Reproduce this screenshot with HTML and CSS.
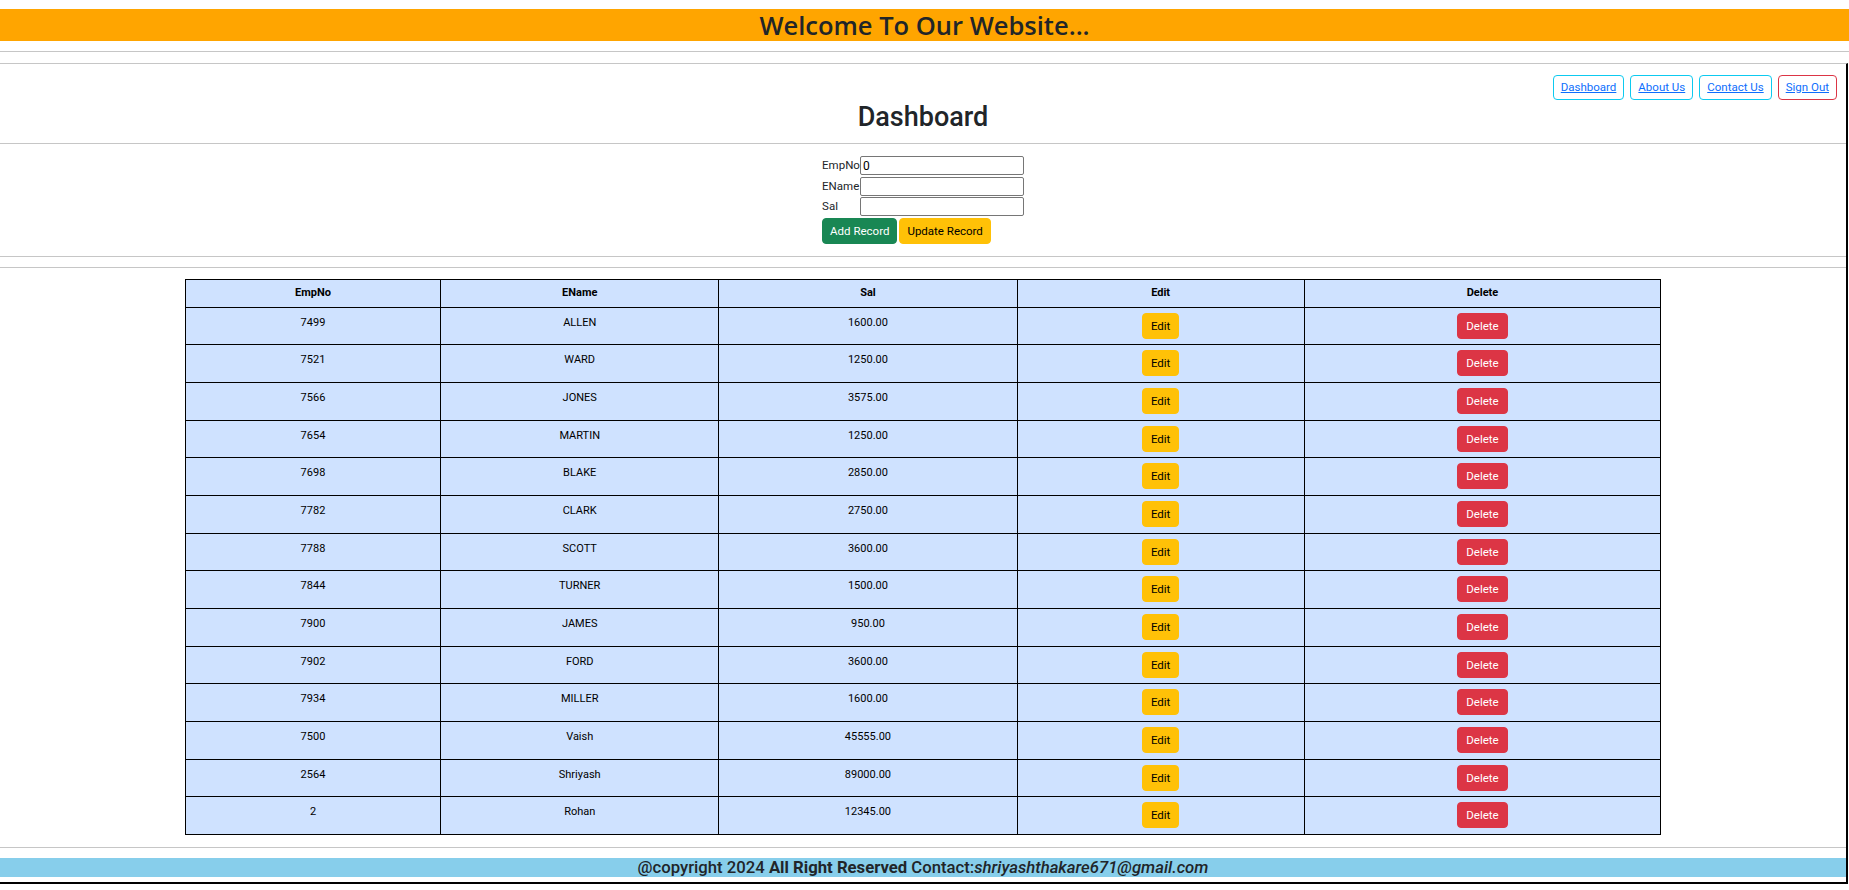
FILE: index.html
```html
<!DOCTYPE html>
<html lang="en">
<head>
<meta charset="utf-8">
<title>Dashboard</title>
<link rel="stylesheet" href="styles.css">
</head>
<body>
<header class="top-bar"><h4 class="top-title">Welcome To Our Website...</h4></header>
<hr class="rule rule-first">
<div class="page">
  <nav class="nav">
    <a class="nav-btn nav-info" href="#">Dashboard</a>
    <a class="nav-btn nav-info" href="#">About Us</a>
    <a class="nav-btn nav-info" href="#">Contact Us</a>
    <a class="nav-btn nav-danger" href="#">Sign Out</a>
  </nav>
  <h3 class="title">Dashboard</h3>
  <hr class="rule rule-title">
  <form class="emp-form">
    <table class="form-table">
      <tr><td class="lbl">EmpNo</td><td class="fld"><input class="inp" type="text" value="0"></td></tr>
      <tr><td class="lbl">EName</td><td class="fld"><input class="inp" type="text" value=""></td></tr>
      <tr><td class="lbl">Sal</td><td class="fld"><input class="inp" type="text" value=""></td></tr>
    </table>
    <div class="form-actions">
      <button type="button" class="btn btn-success">Add Record</button>
      <button type="button" class="btn btn-warning">Update Record</button>
    </div>
  </form>
  <hr class="rule rule-form">
  <hr class="rule rule-form2">
  <table class="data">
    <colgroup>
      <col class="c1"><col class="c2"><col class="c3"><col class="c4"><col class="c5">
    </colgroup>
    <thead>
      <tr><th>EmpNo</th><th>EName</th><th>Sal</th><th>Edit</th><th>Delete</th></tr>
    </thead>
    <tbody>
      <tr><td>7499</td><td>ALLEN</td><td>1600.00</td><td><button type="button" class="btn btn-warning">Edit</button></td><td><button type="button" class="btn btn-danger">Delete</button></td></tr>
      <tr><td>7521</td><td>WARD</td><td>1250.00</td><td><button type="button" class="btn btn-warning">Edit</button></td><td><button type="button" class="btn btn-danger">Delete</button></td></tr>
      <tr><td>7566</td><td>JONES</td><td>3575.00</td><td><button type="button" class="btn btn-warning">Edit</button></td><td><button type="button" class="btn btn-danger">Delete</button></td></tr>
      <tr><td>7654</td><td>MARTIN</td><td>1250.00</td><td><button type="button" class="btn btn-warning">Edit</button></td><td><button type="button" class="btn btn-danger">Delete</button></td></tr>
      <tr><td>7698</td><td>BLAKE</td><td>2850.00</td><td><button type="button" class="btn btn-warning">Edit</button></td><td><button type="button" class="btn btn-danger">Delete</button></td></tr>
      <tr><td>7782</td><td>CLARK</td><td>2750.00</td><td><button type="button" class="btn btn-warning">Edit</button></td><td><button type="button" class="btn btn-danger">Delete</button></td></tr>
      <tr><td>7788</td><td>SCOTT</td><td>3600.00</td><td><button type="button" class="btn btn-warning">Edit</button></td><td><button type="button" class="btn btn-danger">Delete</button></td></tr>
      <tr><td>7844</td><td>TURNER</td><td>1500.00</td><td><button type="button" class="btn btn-warning">Edit</button></td><td><button type="button" class="btn btn-danger">Delete</button></td></tr>
      <tr><td>7900</td><td>JAMES</td><td>950.00</td><td><button type="button" class="btn btn-warning">Edit</button></td><td><button type="button" class="btn btn-danger">Delete</button></td></tr>
      <tr><td>7902</td><td>FORD</td><td>3600.00</td><td><button type="button" class="btn btn-warning">Edit</button></td><td><button type="button" class="btn btn-danger">Delete</button></td></tr>
      <tr><td>7934</td><td>MILLER</td><td>1600.00</td><td><button type="button" class="btn btn-warning">Edit</button></td><td><button type="button" class="btn btn-danger">Delete</button></td></tr>
      <tr><td>7500</td><td>Vaish</td><td>45555.00</td><td><button type="button" class="btn btn-warning">Edit</button></td><td><button type="button" class="btn btn-danger">Delete</button></td></tr>
      <tr><td>2564</td><td>Shriyash</td><td>89000.00</td><td><button type="button" class="btn btn-warning">Edit</button></td><td><button type="button" class="btn btn-danger">Delete</button></td></tr>
      <tr><td>2</td><td>Rohan</td><td>12345.00</td><td><button type="button" class="btn btn-warning">Edit</button></td><td><button type="button" class="btn btn-danger">Delete</button></td></tr>
    </tbody>
  </table>
  <hr class="rule rule-table">
  <footer class="footer">
    <h6 class="footer-text">@copyright 2024 <b>All Right Reserved</b> Contact:<i>shriyashthakare671@gmail.com</i></h6>
  </footer>
</div>
</body>
</html>
```

FILE: styles.css
```css
* { box-sizing: border-box; }

html, body {
  margin: 0;
  padding: 0;
  background: #fff;
}

body {
  font-family: Roboto, "Noto Sans", sans-serif;
  color: #212529;
  font-size: 12px;
}

.top-bar {
  margin-top: 9px;
  height: 32px;
  background: #ffa500;
  display: flex;
  align-items: center;
  justify-content: center;
}

.top-title {
  margin: 0;
  font-family: "Open Sans", Roboto, sans-serif;
  font-size: 25.5px;
  font-weight: 600;
  line-height: 32px;
  color: #212529;
}

.rule {
  border: 0;
  border-top: 1px solid #c6c6c6;
  margin: 0;
  height: 0;
}

.rule-first { margin-top: 10px; }

.page {
  margin-top: 11px;
  margin-right: 1px;
  border-top: 1px solid #c6c6c6;
  border-right: 2px solid #000;
  border-bottom: 2px solid #000;
  padding-bottom: 5px;
}

.nav {
  display: flex;
  justify-content: flex-end;
  gap: 6px;
  margin-top: 11px;
  padding-right: 9px;
}

.nav-btn {
  display: inline-block;
  height: 25px;
  line-height: 23px;
  padding: 0 7px;
  border: 1px solid #0dcaf0;
  border-radius: 4px;
  color: #0d6efd;
  text-decoration: underline;
  font-size: 11.5px;
}

.nav-danger { border-color: #dc3545; }

.title {
  margin: 0;
  text-align: center;
  font-size: 27px;
  font-weight: 500;
  line-height: 34px;
  color: #212529;
}

.rule-title { margin-top: 9px; }

.emp-form {
  display: table;
  margin: 12px auto 0;
}

.form-table {
  border-collapse: collapse;
}

.form-table td {
  padding: 0 0 1.5px 0;
  vertical-align: middle;
}

.lbl {
  width: 37px;
  font-size: 11.5px;
  line-height: 19px;
}

.inp {
  display: block;
  width: 164px;
  height: 19px;
  margin: 0;
  padding: 0 2px;
  border: 1px solid #767676;
  border-radius: 2px;
  font-family: inherit;
  font-size: 12px;
  color: #000;
}

.form-actions {
  display: flex;
  gap: 2px;
}

.btn {
  display: inline-block;
  vertical-align: top;
  height: 26px;
  padding: 0 7px;
  border: 1px solid transparent;
  border-radius: 4px;
  font-family: inherit;
  font-size: 11.5px;
  line-height: 24px;
  cursor: pointer;
}

.btn-success { background: #198754; border-color: #198754; color: #fff; }
.btn-warning { background: #ffc107; border-color: #ffc107; color: #000; }
.btn-danger  { background: #dc3545; border-color: #dc3545; color: #fff; }

.rule-form { margin-top: 12px; }
.rule-form2 { margin-top: 10px; }

.data {
  width: 80%;
  margin: 11px auto 0;
  border-collapse: collapse;
  table-layout: fixed;
  font-size: 11px;
}

.c1 { width: 17.33%; }
.c2 { width: 18.82%; }
.c3 { width: 20.24%; }
.c4 { width: 19.43%; }
.c5 { width: 24.18%; }

.data th,
.data td {
  border: 1px solid #000;
  background: #cfe2ff;
  text-align: center;
  vertical-align: top;
  color: #000;
}

.data th {
  padding: 5.5px 8px;
  line-height: 16px;
  font-weight: 700;
}

.data td {
  padding: 5px 8px 5.7px;
  line-height: 20px;
}

.data .btn { padding: 0 8px; }

.rule-table { margin-top: 11.5px; }

.footer {
  margin-top: 10px;
  background: #87ceeb;
  text-align: center;
}

.footer-text {
  margin: 0;
  font-size: 16.7px;
  font-weight: 500;
  line-height: 19px;
  color: #212529;
}

.footer-text b { font-weight: 700; }
```
